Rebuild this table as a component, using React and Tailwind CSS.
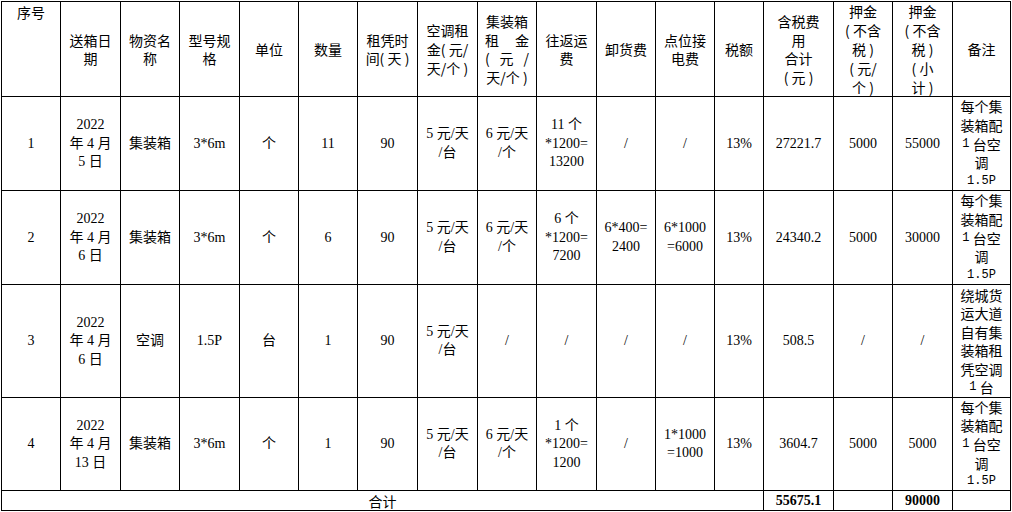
import React from "react";

const cols = [59, 60, 59, 60, 59, 59, 60, 60, 59, 60, 59, 59, 49, 70, 59, 60, 58];

const sans = { fontFamily: '"Noto Sans CJK SC", sans-serif' };

const headers = [
  ["送箱日", "期"],
  ["物资名", "称"],
  ["型号规", "格"],
  ["单位"],
  ["数量"],
  ["租凭时", "间( 天 )"],
  ["空调租", "金( 元/", "天/个 )"],
  null, // 集装箱租金 is spaced out, drawn below
  ["往返运", "费"],
  ["卸货费"],
  ["点位接", "电费"],
  ["税额"],
  ["含税费", "用", "合计", "( 元 )"],
  ["押金", "( 不含", "税 )", "( 元/", "个 )"],
  ["押金", "( 不含", "税 )", "( 小", "计 )"],
  ["备注"],
];

const remarkA = ["每个集", "装箱配", "1 台空", "调", "1.5P"];

const rows = [
  {
    h: "h-[93px]",
    cells: [
      ["1"], ["2022", "年 4 月", "5 日"], ["集装箱"], ["3*6m"], ["个"], ["11"], ["90"],
      ["5 元/天", "/台"], ["6 元/天", "/个"], ["11 个", "*1200=", "13200"], ["/"], ["/"],
      ["13%"], ["27221.7"], ["5000"], ["55000"],
    ],
    remark: remarkA,
  },
  {
    h: "h-[93px]",
    cells: [
      ["2"], ["2022", "年 4 月", "6 日"], ["集装箱"], ["3*6m"], ["个"], ["6"], ["90"],
      ["5 元/天", "/台"], ["6 元/天", "/个"], ["6 个", "*1200=", "7200"], ["6*400=", "2400"],
      ["6*1000", "=6000"], ["13%"], ["24340.2"], ["5000"], ["30000"],
    ],
    remark: remarkA,
  },
  {
    h: "h-[112px]",
    cells: [
      ["3"], ["2022", "年 4 月", "6 日"], ["空调"], ["1.5P"], ["台"], ["1"], ["90"],
      ["5 元/天", "/台"], ["/"], ["/"], ["/"], ["/"], ["13%"], ["508.5"], ["/"], ["/"],
    ],
    remark: ["绕城货", "运大道", "自有集", "装箱租", "凭空调", "1 台"],
  },
  {
    h: "h-[92px]",
    cells: [
      ["4"], ["2022", "年 4 月", "13 日"], ["集装箱"], ["3*6m"], ["个"], ["1"], ["90"],
      ["5 元/天", "/台"], ["6 元/天", "/个"], ["1 个", "*1200=", "1200"], ["/"],
      ["1*1000", "=1000"], ["13%"], ["3604.7"], ["5000"], ["5000"],
    ],
    remark: remarkA,
  },
];

const Box = ({ h, top, children }) => (
  <div
    className={`${h} overflow-hidden flex flex-col items-center ${top ? "justify-start" : "justify-center"}`}
  >
    {children}
  </div>
);

const Lines = ({ lines, lh }) =>
  lines.map((l, i) => (
    <div key={i} className={`${lh} shrink-0 flex items-center justify-center whitespace-pre`}>
      {l}
    </div>
  ));

const RemarkLine = ({ text }) => {
  const parts = text.split(/([0-9.A-Z]+)/);
  return (
    <div className="h-[18.6px] shrink-0 flex items-center justify-center whitespace-pre">
      {parts.map((p, i) =>
        /^[0-9.A-Z]+$/.test(p) ? (
          <span key={i} className="text-[12px]" style={{ fontFamily: '"Liberation Mono", monospace' }}>
            {p}
          </span>
        ) : (
          <span key={i}>{p}</span>
        )
      )}
    </div>
  );
};

export default function App() {
  return (
    <div className="bg-white w-[1012px] h-[512px] pt-px pl-px">
      <table className="table-fixed border-collapse w-[1010px] text-black text-[14px] leading-none">
        <colgroup>
          {cols.map((w, i) => (
            <col key={i} style={{ width: w }} />
          ))}
        </colgroup>
        <thead>
          <tr style={sans}>
            <th className="border border-black font-normal p-0 align-top">
              <Box h="h-[94px]" top>
                <div className="pt-[3px]">序号</div>
              </Box>
            </th>
            {headers.map((h, i) => (
              <th key={i} className="border border-black font-normal p-0">
                <Box h="h-[94px]">
                  {h ? (
                    <Lines lines={h} lh="h-[18.8px]" />
                  ) : (
                    <div className="w-[44px]">
                      <div className="h-[18.8px] flex items-center justify-center">集装箱</div>
                      <div className="h-[18.8px] flex items-center justify-between"><span>租</span><span>金</span></div>
                      <div className="h-[18.8px] flex items-center justify-between"><span>(</span><span>元</span><span>/</span></div>
                      <div className="h-[18.8px] flex items-center justify-center">天/个 )</div>
                    </div>
                  )}
                </Box>
              </th>
            ))}
          </tr>
        </thead>
        <tbody style={{ fontFamily: '"Liberation Serif", "Noto Sans CJK SC", serif' }}>
          {rows.map((r, ri) => (
            <tr key={ri}>
              {r.cells.map((c, ci) => (
                <td key={ci} className="border border-black text-center p-0">
                  <Box h={r.h}>
                    <Lines lines={c} lh="h-[18.5px]" />
                  </Box>
                </td>
              ))}
              <td className="border border-black text-center p-0" style={sans}>
                <Box h={r.h}>
                  {r.remark.map((l, i) => (
                    <RemarkLine key={i} text={l} />
                  ))}
                </Box>
              </td>
            </tr>
          ))}
          <tr>
            <td colSpan={13} className="border border-black p-0" style={sans}>
              <Box h="h-[19px]">合计</Box>
            </td>
            <td className="border border-black p-0 font-bold">
              <Box h="h-[19px]">55675.1</Box>
            </td>
            <td className="border border-black p-0">
              <Box h="h-[19px]" />
            </td>
            <td className="border border-black p-0 font-bold">
              <Box h="h-[19px]">90000</Box>
            </td>
            <td className="border border-black p-0">
              <Box h="h-[19px]" />
            </td>
          </tr>
        </tbody>
      </table>
    </div>
  );
}
